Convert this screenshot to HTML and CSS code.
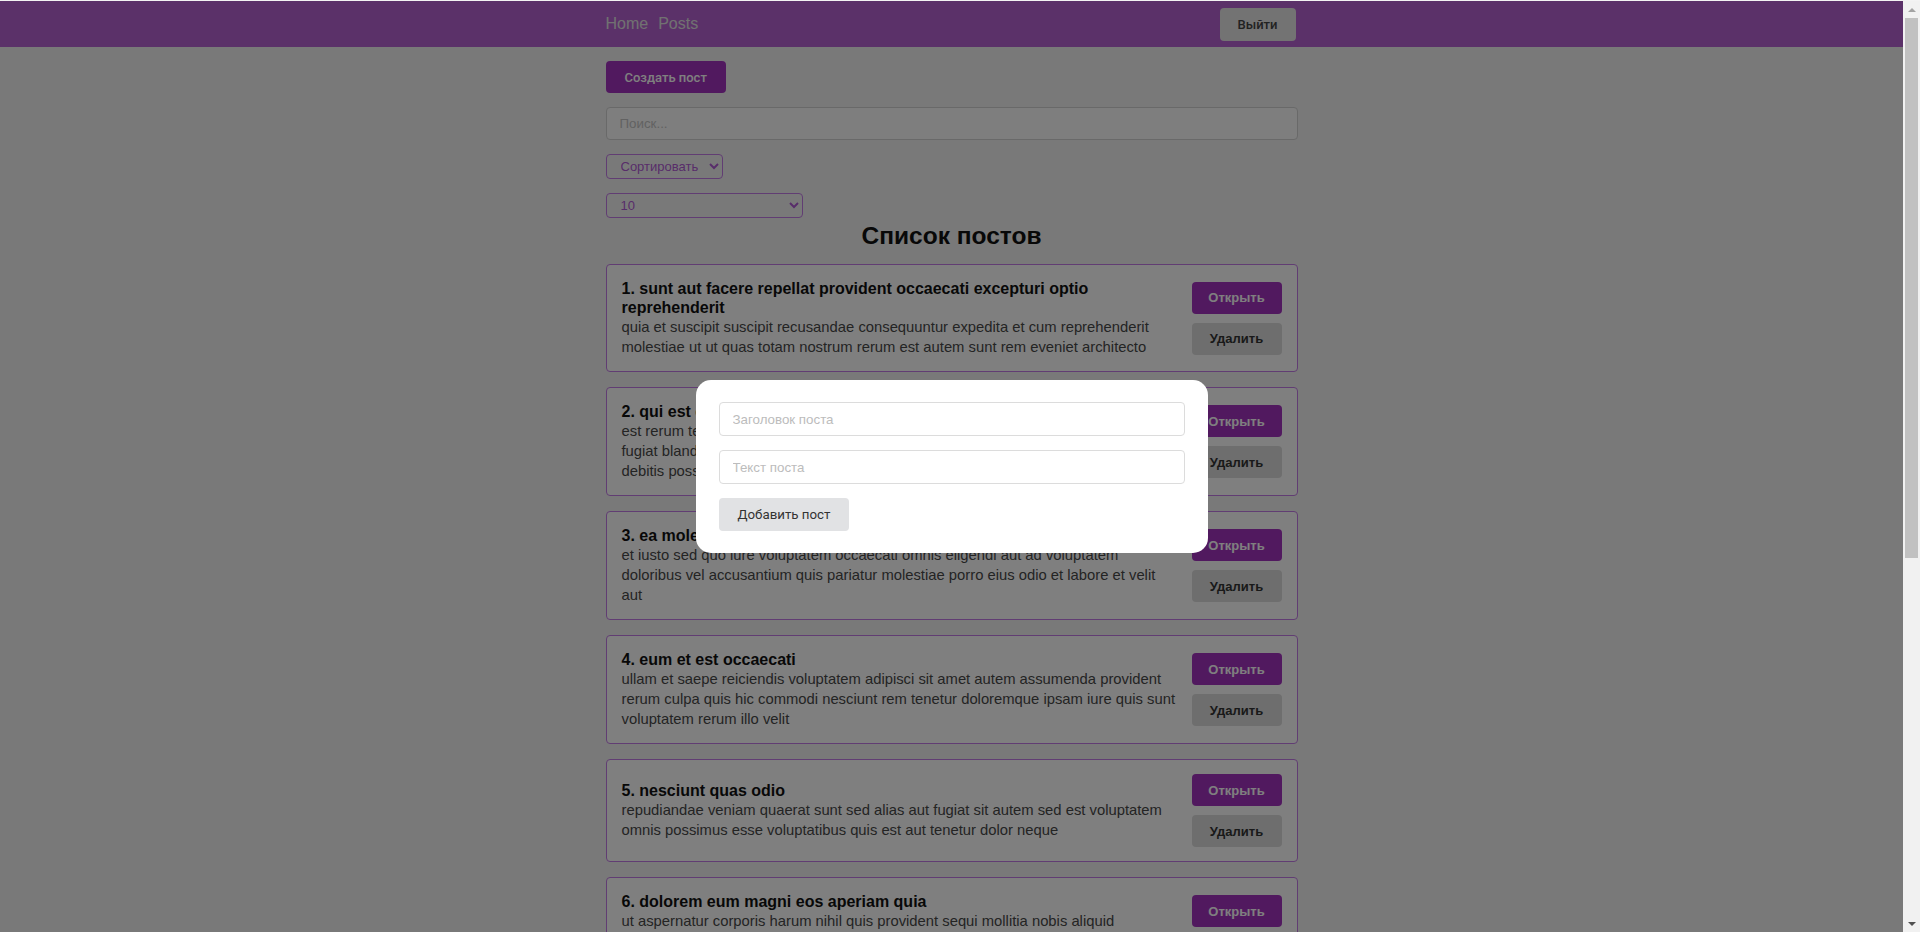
FILE: index.html
```html
<!DOCTYPE html>
<html lang="ru">
<head>
<meta charset="utf-8">
<title>Посты</title>
<link rel="stylesheet" href="styles.css">
</head>
<body>
<div class="page">
<nav class="navbar">
  <div class="navbar__inner">
    <div class="navbar__links">
      <a class="navbar__link" href="#">Home</a>
      <a class="navbar__link" href="#">Posts</a>
    </div>
    <button class="btn btn--light">Выйти</button>
  </div>
</nav>

<main class="app">
  <button class="btn btn--primary">Создать пост</button>
  <input class="search" type="text" placeholder="Поиск...">
  <select class="select select--sort">
    <option>Сортировать</option>
    <option>По названию</option>
    <option>По описанию</option>
  </select>
  <select class="select select--limit">
    <option>10</option>
    <option>25</option>
    <option>Показать все</option>
  </select>
  <h1 class="page-title">Список постов</h1>

  <div class="post">
    <div class="post__content">
      <div class="post__title">1. sunt aut facere repellat provident occaecati excepturi optio reprehenderit</div>
      <div class="post__body">quia et suscipit suscipit recusandae consequuntur expedita et cum reprehenderit molestiae ut ut quas totam nostrum rerum est autem sunt rem eveniet architecto</div>
    </div>
    <div class="post__btns">
      <button class="post__btn post__btn--open">Открыть</button>
      <button class="post__btn post__btn--delete">Удалить</button>
    </div>
  </div>

  <div class="post">
    <div class="post__content">
      <div class="post__title">2. qui est esse</div>
      <div class="post__body">est rerum tempore vitae sequi sint nihil reprehenderit dolor beatae ea dolores neque fugiat blanditiis voluptate porro vel nihil molestiae ut reiciendis qui aperiam non debitis possimus qui neque nisi nulla</div>
    </div>
    <div class="post__btns">
      <button class="post__btn post__btn--open">Открыть</button>
      <button class="post__btn post__btn--delete">Удалить</button>
    </div>
  </div>

  <div class="post">
    <div class="post__content">
      <div class="post__title">3. ea molestias quasi exercitationem repellat qui ipsa sit aut</div>
      <div class="post__body">et iusto sed quo iure voluptatem occaecati omnis eligendi aut ad voluptatem doloribus vel accusantium quis pariatur molestiae porro eius odio et labore et velit aut</div>
    </div>
    <div class="post__btns">
      <button class="post__btn post__btn--open">Открыть</button>
      <button class="post__btn post__btn--delete">Удалить</button>
    </div>
  </div>

  <div class="post">
    <div class="post__content">
      <div class="post__title">4. eum et est occaecati</div>
      <div class="post__body">ullam et saepe reiciendis voluptatem adipisci sit amet autem assumenda provident rerum culpa quis hic commodi nesciunt rem tenetur doloremque ipsam iure quis sunt voluptatem rerum illo velit</div>
    </div>
    <div class="post__btns">
      <button class="post__btn post__btn--open">Открыть</button>
      <button class="post__btn post__btn--delete">Удалить</button>
    </div>
  </div>

  <div class="post">
    <div class="post__content">
      <div class="post__title">5. nesciunt quas odio</div>
      <div class="post__body">repudiandae veniam quaerat sunt sed alias aut fugiat sit autem sed est voluptatem omnis possimus esse voluptatibus quis est aut tenetur dolor neque</div>
    </div>
    <div class="post__btns">
      <button class="post__btn post__btn--open">Открыть</button>
      <button class="post__btn post__btn--delete">Удалить</button>
    </div>
  </div>

  <div class="post">
    <div class="post__content">
      <div class="post__title">6. dolorem eum magni eos aperiam quia</div>
      <div class="post__body">ut aspernatur corporis harum nihil quis provident sequi mollitia nobis aliquid molestiae perspiciatis et ea nemo ab reprehenderit accusantium quas voluptate dolores velit et doloremque molestiae</div>
    </div>
    <div class="post__btns">
      <button class="post__btn post__btn--open">Открыть</button>
      <button class="post__btn post__btn--delete">Удалить</button>
    </div>
  </div>

  <div class="post">
    <div class="post__content">
      <div class="post__title">7. magnam facilis autem</div>
      <div class="post__body">dolore placeat quibusdam ea quo vitae magni quis enim qui quis quo nemo aut saepe quidem repellat excepturi ut quia sunt ut sequi eos ea sed quas</div>
    </div>
    <div class="post__btns">
      <button class="post__btn post__btn--open">Открыть</button>
      <button class="post__btn post__btn--delete">Удалить</button>
    </div>
  </div>

  <div class="post">
    <div class="post__content">
      <div class="post__title">8. dolorem dolore est ipsam</div>
      <div class="post__body">dignissimos aperiam dolorem qui eum facilis quibusdam animi sint suscipit qui sint possimus cum quaerat magni maiores excepturi ipsam ut commodi dolor voluptatum modi aut vitae</div>
    </div>
    <div class="post__btns">
      <button class="post__btn post__btn--open">Открыть</button>
      <button class="post__btn post__btn--delete">Удалить</button>
    </div>
  </div>

  <div class="post">
    <div class="post__content">
      <div class="post__title">9. nesciunt iure omnis dolorem tempora et accusantium</div>
      <div class="post__body">consectetur animi nesciunt iure dolore enim quia ad veniam autem ut quam aut nobis et est aut quod aut provident voluptas autem voluptas</div>
    </div>
    <div class="post__btns">
      <button class="post__btn post__btn--open">Открыть</button>
      <button class="post__btn post__btn--delete">Удалить</button>
    </div>
  </div>

  <div class="post">
    <div class="post__content">
      <div class="post__title">10. optio molestias id quia eum</div>
      <div class="post__body">quo et expedita modi cum officia vel magni doloribus qui repudiandae vero nisi sit quos veniam quod sed accusamus veritatis error</div>
    </div>
    <div class="post__btns">
      <button class="post__btn post__btn--open">Открыть</button>
      <button class="post__btn post__btn--delete">Удалить</button>
    </div>
  </div>
</main>
</div>

<div class="modal">
  <div class="modal__content">
    <form class="modal__form">
      <input class="modal__input" type="text" placeholder="Заголовок поста">
      <input class="modal__input" type="text" placeholder="Текст поста">
      <button class="btn btn--add" type="button">Добавить пост</button>
    </form>
  </div>
</div>

<div class="scrollbar" aria-hidden="true">
  <span class="scrollbar__arrow scrollbar__arrow--up"></span>
  <span class="scrollbar__track"><span class="scrollbar__thumb"></span></span>
  <span class="scrollbar__arrow scrollbar__arrow--down"></span>
</div>
</body>
</html>
```

FILE: styles.css
```css
* {
  margin: 0;
  padding: 0;
  box-sizing: border-box;
}

html {
  background: #f3f3f3;
}

body {
  font-family: "Liberation Sans", Arial, sans-serif;
  background: #f3f3f3;
  padding-top: 1px;
}

.page {
  margin-right: 17px;
  padding-bottom: 40px;
}

.navbar {
  height: 46px;
  background: #b662d2;
  display: flex;
  justify-content: center;
}

.navbar__inner {
  width: 692px;
  display: flex;
  align-items: center;
  justify-content: space-between;
}

.navbar__links {
  display: flex;
  gap: 10px;
}

.navbar__link {
  font-size: 16px;
  color: #e2e2e2;
  text-decoration: none;
}

.btn {
  font-family: Roboto, "Liberation Sans", sans-serif;
  font-size: 13px;
  border: none;
  border-radius: 4px;
  height: 32px;
  padding: 0 19px;
  cursor: pointer;
}

.btn--primary {
  background: #a333bf;
  color: #ffffff;
  font-weight: 500;
}

.btn--light {
  background: #e6e6e6;
  color: #444;
  height: 33px;
  font-weight: 500;
  padding: 0 18px;
  margin-right: 2px;
}

.btn--add {
  background: #e1e2e4;
  color: #333;
  height: 33px;
  font-size: 13.3px;
}

.app {
  width: 692px;
  margin: 14px auto 0;
}

.search {
  display: block;
  width: 100%;
  height: 33px;
  margin-top: 14px;
  border: 1px solid #d2d2d2;
  border-radius: 4px;
  padding: 0 13px;
  font-family: "Liberation Sans", Arial, sans-serif;
  font-size: 13.33px;
  background: #fcfcfc;
}

.search::placeholder {
  color: #c4c4c4;
}

.select {
  display: block;
  margin-top: 14px;
  height: 25px;
  border: 1px solid #c27ae6;
  border-radius: 4px;
  color: #b05ad4;
  background: #f3f3f3;
  padding-left: 10px;
  font-family: "Liberation Sans", Arial, sans-serif;
  font-size: 13px;
}

.select--sort {
  width: 117px;
}

.select--limit {
  width: 197px;
}

.page-title {
  margin-top: 4px;
  text-align: center;
  font-size: 24.5px;
  line-height: 27px;
  font-weight: bold;
  color: #111;
}

.post {
  display: flex;
  align-items: center;
  justify-content: space-between;
  margin-top: 15px;
  padding: 14px 15px;
  border: 1px solid #c27ae6;
  border-radius: 4px;
  background: #ffffff;
}

.post__content {
  flex: 1;
  min-width: 0;
}

.post__title {
  font-size: 16px;
  line-height: 19px;
  font-weight: bold;
  color: #111;
}

.post__body {
  font-size: 14.8px;
  line-height: 20px;
  color: #484848;
}

.post__btns {
  display: flex;
  flex-direction: column;
  gap: 9px;
  width: 90px;
  margin-left: 14px;
  flex-shrink: 0;
}

.post__btn {
  height: 32px;
  border: none;
  border-radius: 4px;
  font-family: "Liberation Sans", Arial, sans-serif;
  font-size: 13px;
  font-weight: bold;
  cursor: pointer;
}

.post__btn--open {
  background: #a333bf;
  color: #ffffff;
}

.post__btn--delete {
  background: #dcdcdc;
  color: #333;
}

.modal {
  position: fixed;
  top: 1px;
  left: 0;
  right: 17px;
  bottom: 0;
  background: rgba(0, 0, 0, 0.5);
  display: flex;
  align-items: center;
  justify-content: center;
}

.modal__content {
  width: 512px;
  padding: 22px 23px;
  background: #ffffff;
  border-radius: 15px;
}

.modal__input {
  display: block;
  width: 100%;
  height: 34px;
  margin-bottom: 14px;
  border: 1px solid #dcdcdc;
  border-radius: 4px;
  padding: 0 13px;
  font-family: "Liberation Sans", Arial, sans-serif;
  font-size: 13.33px;
}

.modal__input::placeholder {
  color: #bcbcbc;
}

/* window scrollbar */
.scrollbar {
  position: fixed;
  top: 1px;
  right: 0;
  bottom: 0;
  width: 17px;
  background: #f1f1f1;
  display: flex;
  flex-direction: column;
}

.scrollbar__arrow {
  height: 17px;
  flex-shrink: 0;
  display: flex;
  align-items: center;
  justify-content: center;
}

.scrollbar__arrow::before {
  content: "";
  width: 0;
  height: 0;
  border-left: 4px solid transparent;
  border-right: 4px solid transparent;
}

.scrollbar__arrow--up::before {
  border-bottom: 4px solid #a3a3a3;
}

.scrollbar__arrow--down::before {
  border-top: 4px solid #505050;
}

.scrollbar__track {
  flex: 1;
  padding: 0 2px;
}

.scrollbar__thumb {
  display: block;
  height: 540px;
  background: #c1c1c1;
}
```
